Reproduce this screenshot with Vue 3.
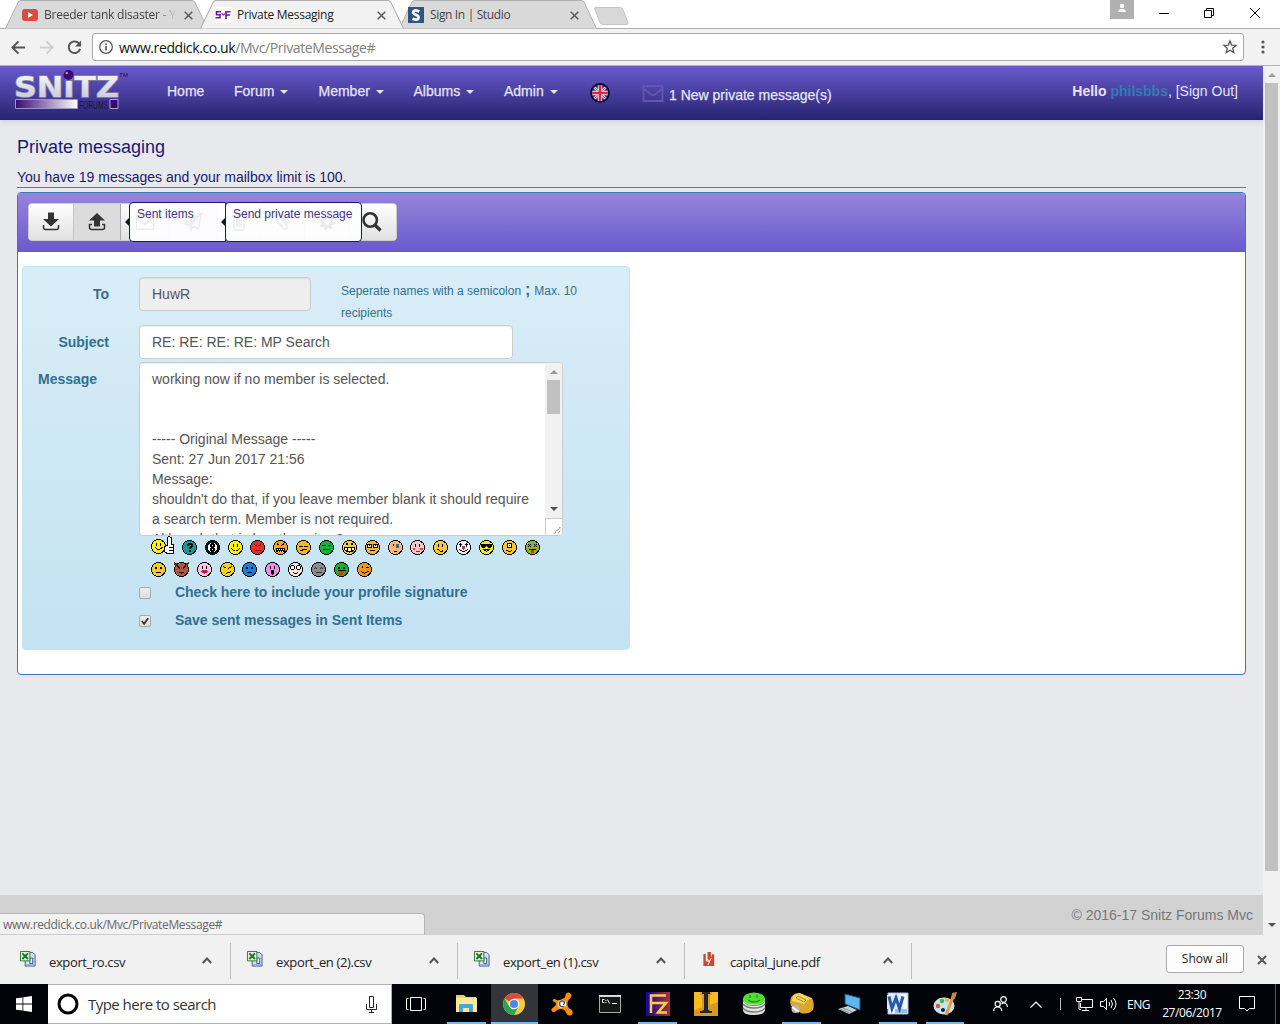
<script setup>
const tabs = [
  { title: 'Breeder tank disaster - Yo', kind: 'video', cls: 'tab-one' },
  { title: 'Private Messaging', kind: 'forum', cls: 'tab-two' },
  { title: 'Sign In | Studio', kind: 'studio', cls: 'tab-three' },
]
const menus = [
  { label: 'Home', w: 67 },
  { label: 'Forum', w: 84.5, caret: true },
  { label: 'Member', w: 95, caret: true },
  { label: 'Albums', w: 90.5, caret: true },
  { label: 'Admin', w: 86, caret: true },
]
const message = `working now if no member is selected.


----- Original Message -----
Sent: 27 Jun 2017 21:56
Message:
shouldn't do that, if you leave member blank it should require
a search term. Member is not required.
Although that is by other sites?`

const eyes = '<path d="M5 4h1v3h-1zM9 4h1v3h-1z"/>'
const dots = '<path d="M4 5h2v2h-2zM9 5h2v2h-2z"/>'
const line = (d, c = '#000') => `<path d="${d}" fill="none" stroke="${c}"/>`
const frown = line('M4.5 11.5q3-3 6 0')
const smile = line('M3.5 8.5q4 5 8 0')
const rowOne = [
  { c: '#159a98', f: '<path d="M5 4h1v-1h4v1h1v3h-1v1h-1v1h-2v-2h1v-1h1v-1h-2v1h-2zM7 10h2v2h-2z"/>' },
  { c: '#111', f: '<circle cx="7.500" cy="7.500" r="4.800" fill="#fff"/><path d="M6 3h3v1h1v3h-1v1h1v3h-1v1h-3v-1h-1v-3h1v-1h-1v-3h1zM7 5v1h1v-1zM7 9v1h1v-1z" fill-rule="evenodd"/>' },
  { c: '#fff200', f: eyes + smile },
  { c: '#e62e26', f: line('M4 4l2.500 2M11 4l-2.500 2M4.500 10.500h6', '#700') },
  { c: '#f6a916', f: line('M4 3.500l2.500 2M11 3.500l-2.500 2') + '<path d="M3 8h9v4h-9z"/><path d="M4 9h1v1h-1zM6 9h1v1h-1zM8 9h1v1h-1zM10 9h1v1h-1zM5 11h1v1h-1zM7 11h1v1h-1zM9 11h1v1h-1z" fill="#fff"/>' },
  { c: '#ffb51e', f: line('M3 6.500h4M8 6.500h4M4.500 11q3-2 6-1') },
  { c: '#1bad35', f: line('M3 5.500h3.500M8.500 5.500h3.500M4 9.500h7', '#064c10') },
  { c: '#ffcc32', f: '<path d="M4 3h2v2h-2zM9 3h2v2h-2z"/><path d="M2.500 7.500h10v2q-5 5-10 0z" fill="#fff" stroke="#000"/>' + line('M5.500 8v4M9.500 8v4') },
  { c: '#f7b52b', f: '<g fill="#fff" stroke="#000"><circle cx="4.500" cy="6" r="2"/><circle cx="10.500" cy="6" r="2"/></g><path d="M4 5h1v1h-1zM10 5h1v1h-1z"/>' + line('M5 10.500h5') },
  { c: '#f6b77d', f: '<path d="M5 4h1v2h-1z"/><path d="M8 4h3v4h-3z" fill="#468"/>' + line('M5.500 11.500h3') },
  { c: '#ffc5c5', f: eyes + '<path d="M2.500 8h2.500v2h-2.500zM10 8h2.500v2h-2.500z" fill="#ef3d4a"/>' + line('M5.500 11.500h4', '#733') },
  { c: '#ffc928', f: eyes + line('M4 9.500q1.500-1 2.500 1t4 0') },
  { c: '#efeff4', f: line('M3 4.500h3M9 4.500h3M4.500 3v4M10.500 3v4') + line('M3 9q4.500 5 9 0') + '<circle cx="7.500" cy="7.800" r="1.900" fill="#b63b59"/>' },
  { c: '#ffe326', f: '<path d="M2 4h11v2l-1 1.500h-3l-1.500-2-1.500 2h-3l-1-1.500z"/><path d="M4 9h7q-3.500 4-7 0z" fill="#fff" stroke="#000"/>' },
  { c: '#ffc52b', f: '<path d="M5.500 3.500h4v4h-4z" fill="#fff" stroke="#000"/><path d="M7 5h1v1h-1z"/>' + line('M4.500 10.500q3 1.500 6 0') },
  { c: '#8ab51c', f: line('M3 4l3 3M6 4l-3 3M9 4l3 3M12 4l-3 3M4 9.500h7') + '<path d="M6 10h3v3h-3z" fill="#e02020"/>' },
]
const rowTwo = [
  { c: '#ffc62a', f: dots + frown },
  { c: '#b2563b', f: line('M3 3.500l3 3M12 3.500l-3 3M5 10.500q2.500 1 5 0', '#311') + '<path d="M0 0l4 2-3 3zM15 0l-4 2 3 3z" fill="#602414"/>' },
  { c: '#ffc4e0', f: eyes + '<path d="M3.500 9q4-1.500 8 0q-4 5-8 0z" fill="#c3195a"/>' },
  { c: '#ffce1e', f: line('M3 4.500l3.500 2M12 4.500l-3.500 2M6 11.500l4-1.500v-1') },
  { c: '#1680dd', f: dots + frown },
  { c: '#f18be6', f: eyes + '<ellipse cx="7.500" cy="10.300" rx="2" ry="2.500"/>' },
  { c: '#f6e6dd', f: '<g fill="#fff" stroke="#000"><circle cx="4.500" cy="5.500" r="2"/><circle cx="10.500" cy="5.500" r="2"/></g>' + line('M5 10.500q2.500 1.500 5 0') },
  { c: '#898b8f', f: line('M3 6.500l1.500-1 1.500 1M9 6.500l1.500-1 1.500 1M4.500 10.500h6', '#333') },
  { c: '#17b32a', f: dots + line('M3.500 8.500h8') + '<path d="M5 9h4v4h-4z" fill="#e03016"/>' },
  { c: '#ef961f', f: '<path d="M5 4h1v2h-1z"/>' + line('M8.500 5.500h3M4 9.500q4 3.500 7.500-.5') },
]
const downloads = [
  { name: 'export_ro.csv', kind: 'csv' },
  { name: 'export_en (2).csv', kind: 'csv' },
  { name: 'export_en (1).csv', kind: 'csv' },
  { name: 'capital_june.pdf', kind: 'pdf' },
]
</script>

<template>
  <div class="screen">
    <header class="tabstrip">
      <div v-for="t in tabs" :key="t.title" class="tab" :class="t.cls">
        <svg class="tab-shape" viewBox="0 0 203 29" preserveAspectRatio="none">
          <path d="M.5 28.500L13 2.500Q14 .5 16 .5H187Q189 .5 190 2.500L202.500 28.500" />
        </svg>
        <svg v-if="t.kind === 'video'" class="fav" viewBox="0 0 16 16"><rect y="2" width="16" height="12" rx="3" fill="#dc4a48" /><path d="M6 5l5 3-5 3z" fill="#fff" /></svg>
        <svg v-else-if="t.kind === 'forum'" class="fav" viewBox="0 0 16 16"><path d="M0 0h16v16H0z" fill="#fff" /><path d="M6 4.800H1.500v3H5v3H.5M11 12V4.800H15.500M11 8H15" fill="none" stroke="#5b1d9e" stroke-width="1.600" /><path d="M6.500 6l2 2L10.500 6" fill="none" stroke="#b03c9a" stroke-width="1.500" /></svg>
        <svg v-else class="fav" viewBox="0 0 16 16"><path d="M0 0h16v16H0z" fill="#31557f" /><path d="M11.300 4.600Q5.200 1.900 5.200 5.600C5.200 8 10.700 7.600 10.700 10.400Q10.500 14 4.500 11.700" fill="none" stroke="#fff" stroke-width="2.700" /></svg>
        <span class="tab-title">{{ t.title }}</span>
        <svg class="tab-close" viewBox="0 0 9 9"><path d="M.7.7l7.600 7.600M8.300.7L.7 8.300" /></svg>
      </div>
      <svg class="newtab" viewBox="0 0 35 18"><path d="M2 .5H26Q28 .5 28.700 2L34 15.500Q34.500 17.500 32.500 17.500H9Q7 17.500 6 15.500L.7 2Q.2.500 2 .5z" fill="#d8d8d8" stroke="#c4c4c4" /></svg>
      <div class="window-controls">
        <svg class="profile" viewBox="0 0 24 19"><path d="M0 0h24v19H0z" fill="#b0b0b0" /><circle cx="12" cy="6" r="2.200" fill="#fff" /><path d="M8 12q0-3 4-3t4 3z" fill="#fff" /></svg>
        <svg class="minimize" viewBox="0 0 10 10"><path d="M0 5.500h10" stroke="#000" /></svg>
        <svg class="restore" viewBox="0 0 10 10"><path d="M.5 2.500h7v7h-7zM2.500 2.500v-2h7v7h-2" fill="none" stroke="#000" /></svg>
        <svg class="shut" viewBox="0 0 10 10"><path d="M0 0l10 10M10 0L0 10" stroke="#000" /></svg>
      </div>
    </header>

    <div class="addressbar">
      <svg class="nav-icon back" viewBox="0 0 16 16"><path d="M15 8H2M8 1.500L1.500 8 8 14.500" /></svg>
      <svg class="nav-icon forward" viewBox="0 0 16 16"><path d="M1 8h13M8 1.500L14.500 8 8 14.500" /></svg>
      <svg class="nav-icon reload" viewBox="0 0 16 16"><path d="M13.200 4.200A6.200 6.200 0 1 0 14 9.500" /><path d="M15 .5v6.500H8.500z" fill="#555" stroke="none" /></svg>
      <div class="omnibox">
        <svg class="info" viewBox="0 0 14 14"><circle cx="7" cy="7" r="6.300" fill="none" stroke="#555" stroke-width="1.300" /><path d="M6.200 6h1.600v4.500H6.200zM6.200 3.300h1.600v1.600H6.200z" fill="#555" /></svg>
        <span class="url"><b>www.reddick.co.uk</b>/Mvc/PrivateMessage#</span>
        <svg class="star" viewBox="0 0 14 14"><path d="M7 1l1.700 4.100 4.400.3-3.400 2.900 1.100 4.300L7 10.300l-3.800 2.300 1.100-4.300L.9 5.400l4.400-.3z" fill="none" stroke="#555" stroke-width="1.300" /></svg>
      </div>
      <svg class="dots" viewBox="0 0 4 14"><circle cx="2" cy="2" r="1.600" /><circle cx="2" cy="7" r="1.600" /><circle cx="2" cy="12" r="1.600" /></svg>
    </div>

    <div class="viewport">
      <div class="page">
        <nav class="navbar">
          <svg class="logo" viewBox="0 0 116 42">
            <defs>
              <linearGradient id="metal" x2="0" y2="1"><stop offset=".2" stop-color="#f1f1f7" /><stop offset="1" stop-color="#bfc0cf" /></linearGradient>
              <linearGradient id="bar"><stop stop-color="#3b0a72" /><stop offset="1" stop-color="#fff" /></linearGradient>
            </defs>
            <text x="-1" y="27" textLength="105" lengthAdjust="spacingAndGlyphs" class="logo-word">SNiTZ</text>
            <circle cx="53.500" cy="5" r="5" fill="#3a0870" /><circle cx="51.700" cy="3" r="1.300" fill="#b783bb" />
            <path d="M.5 29.500h62v9H.5z" fill="url(#bar)" stroke="#9b94c9" />
            <path d="M95 29.500h8v9h-8z" fill="#3a0870" stroke="#aaa4d2" />
            <text x="64" y="38.500" textLength="29" lengthAdjust="spacingAndGlyphs" class="logo-sub">FORUMS</text>
            <text x="104" y="6.500" textLength="9" class="logo-tm">TM</text>
          </svg>
          <div class="menu">
            <a v-for="m in menus" :key="m.label" :style="{ width: m.w + 'px' }">{{ m.label }}<i v-if="m.caret" class="caret"></i></a>
          </div>
          <svg class="flag" viewBox="0 0 20 20">
            <clipPath id="disc"><circle cx="10" cy="10" r="8" /></clipPath>
            <circle cx="10" cy="10" r="9" fill="#2d3684" stroke="#0c0b38" stroke-width="1.800" />
            <g clip-path="url(#disc)"><path d="M2 2l16 16M18 2L2 18" stroke="#d9d8ee" stroke-width="2.600" /><path d="M2 2l16 16M18 2L2 18" stroke="#d73a50" /><path d="M10 1v18M1 10h18" stroke="#e8e6f4" stroke-width="4.400" /><path d="M10 1v18M1 10h18" stroke="#d8283d" stroke-width="2.600" /></g>
          </svg>
          <svg class="envelope" viewBox="0 0 22 17"><path d="M1.500 1h19v15h-19zM1.500 3.500L9 9.500q2 1.500 4 0l7.500-6" /></svg>
          <span class="newpm">1 New private message(s)</span>
          <span class="hello"><b>Hello <em>philsbbs</em></b>, [Sign Out]</span>
        </nav>

        <main>
          <h1>Private messaging</h1>
          <p class="quota">You have 19 messages and your mailbox limit is 100.</p>
          <section class="panel">
            <div class="panel-head">
              <div class="buttons">
                <button class="b1"><svg viewBox="0 0 20 20"><path d="M7 .5h6V7h5l-8 7.500L2 7h5z" fill="#333" /><path d="M2.500 13v2.500q0 2 2 2h11q2 0 2-2V13" fill="none" stroke="#333" stroke-width="1.500" /></svg></button>
                <button class="b2"><svg viewBox="0 0 20 20"><path d="M7 14.500V8.500H2L10 1l8 7.500h-5v6z" fill="#333" /><path d="M5 12.500H2.500v3q0 2 2 2h11q2 0 2-2v-3H15" fill="none" stroke="#333" stroke-width="1.500" /></svg></button>
                <button class="b3"><svg viewBox="0 0 22 20"><path d="M1.500 3h19v15h-19zM1.500 5L9 11.500q2 1.500 4 0L20.500 5" fill="none" stroke="#333" stroke-width="1.500" /></svg></button>
                <button class="b4"><svg viewBox="0 0 20 20"><path d="M1 11.500L18.500 1.500 15.500 17l-5-2.500L8 18v-5L18.500 1.500 5.500 13.500z" fill="none" stroke="#333" stroke-width="1.400" /></svg></button>
                <button class="b5"><svg viewBox="0 0 20 20"><path d="M3 4h14M7 4V2h6v2M5 4v13q0 1 1 1h8q1 0 1-1V4M8 7v8M10 7v8M12 7v8" fill="none" stroke="#333" stroke-width="1.400" /></svg></button>
                <button class="b6"><svg viewBox="0 0 20 20"><path d="M8 7l6 7q1 2-1 3t-3-1L3 7Q1 4 4 2.500T8 4l7 8" fill="none" stroke="#333" stroke-width="1.500" /></svg></button>
                <button class="b7"><svg viewBox="0 0 20 20"><circle cx="10" cy="10" r="5" fill="none" stroke="#333" stroke-width="4" /><circle cx="10" cy="10" r="7.500" fill="none" stroke="#333" stroke-width="3" stroke-dasharray="3 2.890" /></svg></button>
                <button class="b8"><svg viewBox="0 0 20 20"><circle cx="8.200" cy="8" r="6.700" fill="none" stroke="#333" stroke-width="2.600" /><path d="M13 13l5.500 5.500" stroke="#333" stroke-width="3.200" /></svg></button>
                <span class="tip tip-sent">Sent items</span>
                <span class="tip tip-new">Send private message</span>
              </div>
            </div>

            <form class="compose">
              <div class="row row-to">
                <label>To</label>
                <div class="field to">HuwR</div>
                <p class="hint">Seperate names with a semicolon <b>;</b> Max. 10 recipients</p>
              </div>
              <div class="row row-subject">
                <label>Subject</label>
                <div class="field subject">RE: RE: RE: RE: MP Search</div>
              </div>
              <div class="row row-message">
                <label>Message</label>
                <div class="textarea">
                  <div class="body">{{ message }}</div>
                  <div class="scroll">
                    <i class="up"></i><i class="thumb"></i><i class="down"></i>
                    <svg class="grip" viewBox="0 0 17 17"><path d="M8.500 15.500l7-7M12.500 15.500l3-3" stroke="#444" stroke-dasharray="1.400 .4" /></svg>
                  </div>
                </div>
              </div>
              <div class="smileys">
                <svg class="thumbsup" viewBox="0 0 23 19">
                  <circle cx="7.500" cy="10.500" r="7" fill="#ffed18" stroke="#000" /><g transform="translate(0 3)"><path d="M5 4h1v3h-1zM9 4h1v3h-1zM3 8h1q3.500 4 7 0h1q-4.500 6-9 0z" /></g>
                  <path d="M16.500 1.500q2-1.500 3.500 0v7h2.500v9H16l-2.500-2v-5l3-1.500z" fill="#fff" stroke="#000" /><path d="M18 11.500h4M18 14.500h4" stroke="#000" />
                </svg>
                <svg v-for="(s, i) in rowOne" :key="i" class="smiley" viewBox="0 0 15 15"><circle cx="7.500" cy="7.500" r="7" :fill="s.c" stroke="#000" /><g v-html="s.f"></g></svg>
              </div>
              <div class="smileys second">
                <svg v-for="(s, i) in rowTwo" :key="i" class="smiley" viewBox="0 0 15 15"><circle cx="7.500" cy="7.500" r="7" :fill="s.c" stroke="#000" /><g v-html="s.f"></g></svg>
              </div>
              <div class="check first"><i></i><b>Check here to include your profile signature</b></div>
              <div class="check"><i><svg viewBox="0 0 11 11"><path d="M2 5.500l2.500 3L9 2.500" fill="none" stroke="#333" stroke-width="2" /></svg></i><b>Save sent messages in Sent Items</b></div>
            </form>
          </section>
        </main>
        <footer>© 2016-17 Snitz Forums Mvc</footer>
        <div class="status">www.reddick.co.uk/Mvc/PrivateMessage#</div>
      </div>
      <div class="pagescroll"><i class="up"></i><i class="thumb"></i><i class="down"></i></div>
    </div>

    <div class="shelf">
      <div v-for="d in downloads" :key="d.name" class="dl">
        <svg v-if="d.kind === 'csv'" class="dl-icon" viewBox="0 0 17 17">
          <path d="M6.500 1.500h7l2.500 2.500v12H5.500V9" fill="#d3e0f4" stroke="#3b568a" /><path d="M10.500 7.500h3v6h-3z" fill="#fff" stroke="#2c4a83" /><path d="M6 14h9v1.500H6z" fill="#8fabd8" />
          <path d="M.5.5h10v10H.5z" fill="#dff2db" stroke="#27792c" /><path d="M2.500 2.500l6 6M8.500 2.500l-6 6" stroke="#17762a" stroke-width="2" />
        </svg>
        <svg v-else class="dl-icon pdf" viewBox="0 0 17 17"><path d="M2.500 3.500l2.500-.7V10l2 2V1h3.500v6L12 3.500h2V16H2.500z" fill="#ca4930" /><path d="M7 8.500l1.500 3L11 7.500M9.500 10L7.500 15" stroke="#fff" fill="none" /></svg>
        <span>{{ d.name }}</span>
        <svg class="chev" viewBox="0 0 10 7"><path d="M.8 6L5 1.500 9.200 6" /></svg>
      </div>
      <div class="showall">Show all</div>
      <svg class="shelf-close" viewBox="0 0 10 10"><path d="M1 1l8 8M9 1L1 9" /></svg>
    </div>

    <div class="taskbar">
      <div class="start"><svg viewBox="0 0 16 16"><path d="M0 2.300L6.500 1.400v6.100H0zM7.300 1.300L16 0v7.500H7.300zM0 8.400h6.500v6.200L0 13.700zM7.300 8.400H16V16l-8.700-1.200z" fill="#fff" /></svg></div>
      <div class="search">
        <svg class="cortana" viewBox="0 0 22 22"><circle cx="11" cy="11" r="9" fill="none" stroke="#000" stroke-width="3" /></svg>
        <span>Type here to search</span>
        <svg class="mic" viewBox="0 0 11 17"><path d="M3.500.5h4v11h-4zM.5 8v5.500h10V8M5.500 13.500v3M3 16.500h5" fill="none" stroke="#222" /></svg>
      </div>
      <div class="task taskview"><svg viewBox="0 0 20 16"><path d="M4.500 1.500h11v13h-11zM2.500 2.500h-2v11h2M17.500 2.500h2v11h-2" fill="none" stroke="#fff" /></svg></div>
      <div class="task open explorer"><svg viewBox="0 0 24 24"><path d="M2 3h8l2 2h10v15H2z" fill="#f2cc67" /><path d="M2 6h21v14H2z" fill="#ffe797" /><path d="M5 20v-7q0-1 1-1h12q1 0 1 1v7h-4v-4H9v4z" fill="#41a8dc" /></svg></div>
      <div class="task open chrome"><svg viewBox="0 0 24 24"><circle cx="12" cy="12" r="11" fill="#f6c744" /><path d="M12 12L2.500 6.500A11 11 0 0 1 21.500 6.500H12z" fill="#db4a3f" /><path d="M12 12L7.500 15 2.500 6.500A11 11 0 0 0 12 23l4.500-8.500z" fill="#2fa05a" /><circle cx="12" cy="12" r="5.200" fill="#fff" /><circle cx="12" cy="12" r="4.100" fill="#4b87ea" /></svg></div>
      <div class="task avast"><svg viewBox="0 0 24 24"><path d="M12 7Q16 6 15.500 2.500Q17-.5 20 1q3 2.500 0 5.500Q17 9 17.500 13q1 4 4 4.500 2.500 3 0 5.500-3.500 1.500-5-1.500-1-4-5-4.500-4-.5-6 2.500-2 1.500-3.500 0-1.500-2 .5-3.500Q6 14 6 11.500 5.500 10 3.500 9.500 2 8.500 3 7.500q1.500-1 3.500.5 2.500 1 5.500-1z" fill="#fb8d13" /><circle cx="12" cy="12" r="4" fill="#fff" /><path d="M14.500 14.500q-5 1-5-2.500t3-3 1 4" fill="none" stroke="#555" stroke-width="1.500" /></svg></div>
      <div class="task cmd"><svg viewBox="0 0 24 24"><path d="M1.500 3.500h21v17h-21z" fill="#171717" stroke="#aaa" /><path d="M1 3h22v2H1z" fill="#d8dde2" /><path d="M6.500 7.500h-2v3h2M8 8v1M8 10v1M9.500 7.500l2 4M14 11.500h5" stroke="#fff" fill="none" /></svg></div>
      <div class="task open filezilla"><svg viewBox="0 0 24 24"><defs><linearGradient id="fz"><stop stop-color="#1206a5" /><stop offset="1" stop-color="#a43232" /></linearGradient></defs><path d="M0 0h24v24H0z" fill="url(#fz)" /><path d="M5 21V3.500h15M5 11h15L12 20.500h9" stroke="#ffcc46" stroke-width="2.500" fill="none" /></svg></div>
      <div class="task iapp"><svg viewBox="0 0 24 24"><path d="M0 0h24v24H0z" fill="#f7ba20" /><path d="M0 18l24-8v14H0z" fill="#d79922" /><path d="M0 0h6v3h2v15H6v4h12v-4h-2V3h2V0h-2v2H8V0z" fill="#d99a20" /><path d="M8 0h8v2h-2v15q0 2 4 2v2H6v-2q4 0 4-2V2H8z" fill="#252525" /></svg></div>
      <div class="task db"><svg viewBox="0 0 24 24"><path d="M1 6v12q0 5 11 5t11-5V6z" fill="#e2e5df" /><path d="M1 12q3 4 11 4t11-4M1 16q3 4 11 4t11-4" fill="none" stroke="#777" stroke-width="1.300" /><ellipse cx="12" cy="6.500" rx="11" ry="6" fill="#51dd30" /><path d="M1 7q1 6 11 6t11-6v2q-2 5-11 5T1 9z" fill="#38b622" /><path d="M8 3v3M15 3v3M6 8q6 4 12 0" stroke="#157910" fill="none" /></svg></div>
      <div class="task open tool"><svg viewBox="0 0 24 24"><path d="M2 4q5-5 10-2l10 4q3 6 1 12-5 5-12 3L1 14Q-1 8 2 4z" fill="#d9a632" /><path d="M3 4q5-4 9-2l10 5q-5 0-8 5L2 9z" fill="#f4d55d" /><path d="M8 4l8 4-2 2-8-4z" fill="none" stroke="#ac8522" /><circle cx="5.500" cy="17" r="4" fill="#bdb9a4" /><path d="M2 15l7 5" stroke="#fff" stroke-width="2" /></svg></div>
      <div class="task pc"><svg viewBox="0 0 24 24"><path d="M7 2l15 4v12L7 12z" fill="#5db7ed" stroke="#244f70" /><path d="M0 17l10-3 9 4-8 4z" fill="#c8d2d7" /><path d="M2 17l9 4M5 16l9 4" stroke="#788890" /></svg></div>
      <div class="task open word"><svg viewBox="0 0 24 24"><path d="M2 1h20v21H2z" fill="#f3f7fd" stroke="#9cbce5" /><path d="M9 18h12M9 20h12" stroke="#447cc7" /><path d="M1 3h16v14H1z" fill="#dbe8fb" /><path d="M3 4.500l3 12L10 6l3.500 10.500 3.500-12" fill="none" stroke="#2458ac" stroke-width="3" /></svg></div>
      <div class="task open paint"><svg viewBox="0 0 24 24"><ellipse cx="11" cy="14" rx="10.500" ry="8.500" fill="#c5e3f3" /><circle cx="5" cy="14" r="2.200" fill="#dc5044" /><circle cx="9" cy="9" r="2.200" fill="#53a651" /><circle cx="14" cy="8" r="2.100" fill="#efb629" /><circle cx="10" cy="18" r="2" fill="#10213a" /><path d="M13 23L20 5" stroke="#e89a3b" stroke-width="3" /><path d="M18 6l1-5 5-1-2 7z" fill="#c18452" /></svg></div>
      <div class="tray">
        <svg class="people" viewBox="0 0 15 16"><g fill="none" stroke="#fff" stroke-width="1.200"><circle cx="10.500" cy="3.500" r="2.800" /><circle cx="4.700" cy="8" r="2.600" /><path d="M.7 15q0-4 4-4t4 4M8.500 8q5-3 6 3" /></g></svg>
        <svg class="up-chev" viewBox="0 0 12 7"><path d="M.5 6.500L6 1l5.500 5.500" fill="none" stroke="#fff" stroke-width="1.200" /></svg>
        <i class="sep"></i>
        <svg class="net" viewBox="0 0 17 15"><path d="M5 2.500h11.500v8H4.500V6M10 11v3M6 13.500h7M.5.5h5v4h-5zM3 4.500v8h2" fill="none" stroke="#fff" /></svg>
        <svg class="vol" viewBox="0 0 17 14"><path d="M.5 4.500h3l3-3v11l-3-3h-3zM9 5q1.500 2 0 4M11 3q3 4 0 8M13.500 1q5 6 0 12" fill="none" stroke="#fff" /></svg>
        <span class="lang">ENG</span>
        <span class="clock">23:30<br />27/06/2017</span>
        <svg class="action" viewBox="0 0 16 16"><path d="M.5.5h15v12h-5L8 15l-2.500-2.500h-5z" fill="none" stroke="#fff" /></svg>
        <i class="desk"></i>
      </div>
    </div>
  </div>
</template>

<style>
body { margin: 0; overflow: hidden; }
</style>

<style scoped>
.screen { width: 1280px; height: 1024px; display: flex; flex-direction: column; overflow: hidden; background: #fff; font-family: "Liberation Sans", Arial, sans-serif; font-size: 14px; color: #555; }
.screen * { box-sizing: border-box; }
svg { display: block; flex: none; overflow: visible; }
i { display: block; flex: none; }
.tabstrip { height: 29px; flex: none; display: flex; border-bottom: 1px solid #b0b0b0; font-family: "Open Sans", "Noto Sans", sans-serif; font-size: 12px; }
.tab { position: relative; height: 29px; display: flex; align-items: center; color: #444; }
.tab > * { position: relative; }
.tab .tab-shape { position: absolute; left: 0; top: 0; width: 100%; height: 29px; }
.tab-shape path { fill: #d9d9d9; stroke: #b0b0b0; }
.tab-one { width: 203px; margin-left: 5px; padding-left: 17px; }
.tab-two { width: 204px; margin-left: -8px; padding-left: 15px; z-index: 2; color: #222; }
.tab-three { width: 198px; margin-left: -5px; padding-left: 9px; }
.tab-two .tab-shape path { fill: #f2f2f2; }
.fav { width: 16px; height: 16px; margin-top: 1px; }
.tab-title { width: 133px; margin-left: 6px; overflow: hidden; white-space: nowrap; letter-spacing: -.27px; }
.tab-one .tab-title { letter-spacing: -.22px; -webkit-mask-image: linear-gradient(90deg, #000 84%, transparent 100%); }
.tab-two .tab-title { width: 134px; }
.tab-three .tab-title { width: 134px; letter-spacing: -.35px; }
.tab-close { width: 9px; height: 9px; margin-left: 6px; margin-top: 1px; }
.tab-one .tab-close { margin-left: 7px; }
.tab-close path { stroke: #5a5a5a; stroke-width: 1.5; }
.newtab { width: 35px; height: 18px; margin: 7px 0 0 -3px; }
.window-controls { margin-left: auto; display: flex; align-items: flex-start; }
.profile { width: 24px; height: 19px; margin-right: 25px; }
.minimize, .restore, .shut { width: 10px; height: 10px; margin-top: 8px; margin-right: 35px; }
.restore { margin-right: 36px; }
.shut { margin-right: 20px; }

.addressbar { height: 37px; flex: none; display: flex; align-items: center; background: #f2f2f2; border-bottom: 1px solid #b5b5b5; }
.nav-icon { width: 15px; height: 15px; fill: none; stroke: #555; stroke-width: 2.1; }
.back { margin-left: 11px; } .forward { margin-left: 13px; stroke: #d0d0d0; } .reload { margin-left: 13px; }
.omnibox { width: 1152px; height: 28px; margin-left: 10px; display: flex; align-items: center; padding: 0 6px; border: 1px solid #aaa; border-radius: 3px; background: #fff; }
.info { width: 14px; height: 14px; }
.url { margin-left: 6px; font: 14px "Open Sans", "Noto Sans", sans-serif; color: #808080; letter-spacing: -.4px; }
.url b { font-weight: 400; color: #111; }
.star { width: 14px; height: 14px; margin-left: auto; }
.dots { width: 4px; height: 14px; margin-left: 17px; fill: #555; }

.viewport { height: 869px; flex: none; display: flex; }
.page { position: relative; width: 1263px; display: flex; flex-direction: column; background: #e8e9ed; }
.navbar { height: 54px; flex: none; display: flex; align-items: flex-start; background: linear-gradient(#6a5acd, #272370); box-shadow: 0 2px 5px rgba(0, 0, 40, .1); color: #e6e4f7; line-height: 20px; -webkit-text-stroke: .25px; }
.logo { width: 116px; height: 42px; margin: 4px 0 0 15px; -webkit-text-stroke: 0; }
.logo-word { font: bold 29px "DejaVu Sans", sans-serif; fill: url(#metal); stroke: #8583a5; stroke-width: 1.6px; paint-order: stroke; -webkit-text-stroke: 1.6px #8583a5; }
.logo-sub { font: 10px "Liberation Sans", sans-serif; fill: #17123f; }
.logo-tm { font: 6px "Liberation Sans", sans-serif; fill: #17123f; }
.menu { display: flex; width: 423px; margin: 15px 0 0 36px; }
.menu a { display: flex; align-items: center; }
.caret { margin: 1px 0 0 6px; border: 4px solid transparent; border-top-color: #e6e4f7; border-bottom: 0; }
.flag { width: 20px; height: 20px; margin-top: 17px; }
.envelope { width: 22px; height: 17px; margin: 19px 0 0 32px; fill: none; stroke: #6457b4; stroke-width: 1.8; }
.newpm { margin: 19px 0 0 5px; }
.hello { margin: 15px 25px 0 auto; -webkit-text-stroke: 0; }
.hello em { font-style: normal; color: #337ab7; }
main { height: 775px; flex: none; padding: 16px 17px 0; }
h1 { margin: 0; font-weight: 400; font-size: 18px; line-height: 22px; color: #191970; }
.quota { margin: 9px 0 4px; height: 21px; line-height: 20px; color: #191970; border-bottom: 1px solid #777; }
.panel { height: 483px; border: 1px solid #337ab7; border-radius: 4px; background: #fff; }
.panel-head { height: 59px; padding: 10px; border-radius: 3px 3px 0 0; background: linear-gradient(#9585da, #6a5acd); }
.buttons { position: relative; width: 369px; height: 38px; display: flex; border: 1px solid #ccc; border-radius: 4px; background: #eee; }
button { padding: 0; display: flex; align-items: center; justify-content: center; border: 0; border-right: 1px solid #c5c5c5; background: linear-gradient(#fff, #e0e0e0); }
button svg { width: 20px; height: 20px; }
.b1 { width: 45px; border-radius: 3px 0 0 3px; } .b2 { width: 47px; background: #dcdcdc; border-right-color: #aaa; } .b3 { width: 48px; } .b4 { width: 49px; background: #e0e0ef; } .b5 { width: 43px; } .b6 { width: 44px; } .b7 { width: 45px; } .b8 { width: 46px; padding-right: 2px; border: 0; border-radius: 0 3px 3px 0; }
.b7 svg { width: 18px; }
.tip { position: absolute; top: -2px; height: 40px; padding: 4px 7px; border: 1px solid #191970; border-radius: 4px; background: rgba(255, 255, 255, .9); color: #3a3585; font-size: 12px; line-height: 14px; white-space: nowrap; }
.tip::before { content: ""; position: absolute; left: -5px; top: 15px; border: 4px solid transparent; border-right-color: #111133; border-left: 0; }
.tip-sent { left: 100px; width: 97px; border-top-right-radius: 0; border-bottom-right-radius: 0; } .tip-new { left: 196px; width: 137px; }

.compose { width: 608px; height: 384px; margin: 14px 0 0 4px; padding: 10px 0 0 15px; border: 1px solid #bce8f1; border-radius: 4px; background: linear-gradient(#d9edf7, #c3e2f2); color: #31708f; }
.row { display: flex; line-height: 20px; }
.row label { width: 71px; margin-right: 30px; padding-top: 7px; font-weight: 700; text-align: right; }
.field { height: 34px; padding: 6px 12px; border: 1px solid #ccc; border-radius: 4px; background: #fff; color: #555; box-shadow: inset 0 1px 1px rgba(0, 0, 0, .075); }
.to { width: 172px; background: #eee; } .subject { width: 374px; }
.hint { width: 250px; height: 48px; margin: 0 0 0 30px; padding-top: 3px; font-size: 12px; line-height: 22px; }
.hint b { font-size: 16px; line-height: 12px; margin: 0 .6px; }
.row-message { margin-top: 3px; }
.row-message label { width: 101px; margin: 0; text-align: left; }
.textarea { width: 424px; height: 174px; display: flex; border: 1px solid #ccc; border-radius: 4px; background: #fff; overflow: hidden; box-shadow: inset 0 1px 1px rgba(0, 0, 0, .075); }
.body { width: 405px; padding: 6px 0 0 12px; white-space: pre; color: #555; }
.scroll { width: 17px; background: #f1f1f1; display: flex; flex-direction: column; align-items: center; }
.up { border: 4px solid transparent; border-bottom-color: #999; border-top: 0; margin-top: 7px; }
.down { border: 4px solid transparent; border-top-color: #505050; border-bottom: 0; }
.scroll .thumb { width: 13px; height: 34px; margin: 6px 0 93px; background: #c1c1c1; }
.grip { width: 17px; height: 17px; margin-top: 7px; background: #fff; border-top: 1px solid #ccc; border-left: 1px solid #ccc; }
.smileys { display: flex; align-items: flex-end; gap: 7.87px; height: 19px; margin: 0 0 0 113px; }
.smileys.second { margin-top: 3px; }
.smileys svg { shape-rendering: crispEdges; }
.smiley { width: 15px; height: 15px; } .thumbsup { width: 23px; height: 19px; }
.check { display: flex; align-items: center; height: 20px; margin: 8px 0 0 101px; }
.check.first { margin-top: 5px; }
.check i { width: 12px; height: 12px; margin: 2px 24px 0 0; border: 1px solid #aaa; border-radius: 2px; background: linear-gradient(#eee, #ddd); }
.check svg { width: 10px; height: 10px; }
.check b { letter-spacing: -.02px; }
footer { height: 40px; padding: 10px 10px 0 0; text-align: right; line-height: 20px; background: #d2d2d2; color: #777; }
.status { position: absolute; left: -1px; bottom: 0; width: 426px; height: 22px; padding: 2px 0 0 3px; border: 1px solid #b5b5b5; border-bottom-color: #ccc; border-top-right-radius: 4px; background: #f2f2f2; color: #686868; font: 12px/17px "Open Sans", "Noto Sans", sans-serif; letter-spacing: -.35px; }
.pagescroll { width: 17px; background: #f1f1f1; display: flex; flex-direction: column; align-items: center; }
.pagescroll .thumb { width: 13px; height: 788px; margin: 6px 0 52px; background: #c1c1c1; }

.shelf { height: 49px; flex: none; display: flex; align-items: center; background: #f1f1f1; font: 13px "Open Sans", "Noto Sans", sans-serif; color: #222; }
.dl { width: 227px; height: 36px; margin-top: 2px; display: flex; align-items: center; padding: 0 18px 0 16px; border-right: 1px solid #c0c0c0; letter-spacing: -.37px; }
.dl:first-child { width: 231px; padding-left: 20px; }
.dl-icon { width: 16px; height: 16px; margin-top: -3px; } .dl span { margin: 2px 0 0 13px; }
.chev { width: 10px; height: 7px; margin-left: auto; fill: none; stroke: #555; stroke-width: 2; }
.showall { width: 78px; height: 28px; margin: -1px 13px 0 auto; border: 1px solid #aaa; border-radius: 3px; background: #fdfdfd; text-align: center; font-size: 12px; line-height: 26px; }
.shelf-close { width: 10px; height: 10px; margin-right: 13px; stroke: #555; stroke-width: 2; }

.taskbar { height: 40px; flex: none; display: flex; background: #020409; color: #fff; font-family: "Open Sans", "Noto Sans", sans-serif; }
.start { width: 48px; padding: 12px 16px; } .start svg { width: 16px; height: 16px; }
.search { width: 344px; height: 40px; display: flex; align-items: center; padding-left: 9px; background: #fff; border: 1px solid #b0b0b0; font-size: 15px; letter-spacing: -.53px; color: #333; border-left: 0; }
.cortana { width: 22px; height: 22px; } .search span { margin-left: 9px; } .mic { width: 11px; height: 17px; margin: 0 14px 0 auto; }
.task { width: 48px; height: 40px; padding: 8px 12px 0; }
.task svg { width: 24px; height: 24px; }
.taskview { width: 50px; padding: 12px 14px; } .taskview svg { width: 20px; height: 16px; }
.open { box-shadow: inset 0 -2px #76b9ed; }
.explorer { width: 39px; margin-left: 5px; padding-left: 7px; } .chrome { width: 47px; margin-left: 5px; background: #333539; padding-left: 11px; } .avast { margin-left: 0; }
.filezilla { width: 39px; margin: 0 5px 0 4px; padding-left: 8px; }
.tool { width: 39px; margin: 0 5px 0 4px; padding-left: 8px; } .word { width: 38px; margin: 0 5px 0 5px; padding-left: 7px; } .paint { width: 38px; margin-left: 4px; padding-left: 7px; }
.tray { flex: 1; display: flex; align-items: center; justify-content: flex-end; font-size: 12px; letter-spacing: -.5px; }
.people { width: 15px; height: 16px; margin-right: 22px; } .up-chev { width: 12px; height: 7px; margin-right: 18px; } .sep { width: 1px; height: 12px; margin-right: 15px; background: #bbb; } .net { width: 17px; height: 15px; margin-right: 7px; } .vol { width: 17px; height: 14px; margin-right: 10px; }
.lang { width: 24px; } .clock { width: 62px; margin: 0 16px 0 10px; text-align: center; line-height: 18px; white-space: nowrap; letter-spacing: -.4px; } .action { width: 16px; height: 16px; margin-right: 20px; } .desk { width: 1px; height: 40px; background: #555; margin-right: 4px; }
</style>
